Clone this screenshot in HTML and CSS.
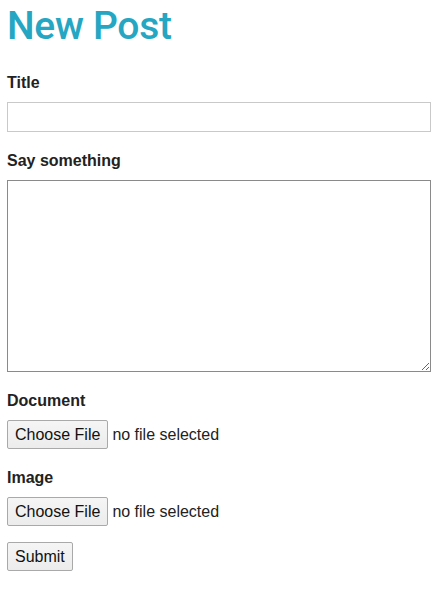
FILE: index.html
```html
<!DOCTYPE html>
<html lang="en">
<head>
<meta charset="utf-8">
<title>New Post</title>
<link rel="stylesheet" href="styles.css">
</head>
<body>
<main class="page">
  <h1 class="title">New Post</h1>
  <form class="post-form">
    <div class="field">
      <label class="label" for="title">Title</label>
      <input class="text-input" id="title" type="text">
    </div>
    <div class="field">
      <label class="label" for="body">Say something</label>
      <textarea class="textarea" id="body"></textarea>
    </div>
    <div class="field">
      <span class="label">Document</span>
      <div class="file-row">
        <button type="button" class="btn">Choose File</button>
        <span class="file-status">no file selected</span>
      </div>
    </div>
    <div class="field">
      <span class="label">Image</span>
      <div class="file-row">
        <button type="button" class="btn">Choose File</button>
        <span class="file-status">no file selected</span>
      </div>
    </div>
    <div class="actions">
      <button type="submit" class="btn">Submit</button>
    </div>
  </form>
</main>
</body>
</html>
```

FILE: styles.css
```css
* {
  box-sizing: border-box;
}

html, body {
  margin: 0;
  background: #ffffff;
}

.page {
  padding: 2px 7px 0;
  font-family: Roboto, "Liberation Sans", sans-serif;
  color: #222222;
}

.title {
  margin: 0 0 23px;
  font-size: 39px;
  line-height: 48px;
  font-weight: 500;
  color: #25a6c2;
  letter-spacing: -0.3px;
}

.post-form {
  display: flex;
  flex-direction: column;
}

.field {
  display: flex;
  flex-direction: column;
  margin-bottom: 19px;
}

.label {
  display: block;
  font-family: "Liberation Sans", Arial, sans-serif;
  font-size: 16px;
  line-height: 20px;
  font-weight: 700;
  margin-bottom: 9px;
  color: #222222;
}

.text-input {
  display: block;
  width: 100%;
  height: 30px;
  margin: 0;
  border: 1px solid #c9c9c9;
  border-radius: 0;
  padding: 4px 6px;
  font-size: 16px;
  background: #ffffff;
}

.textarea {
  display: block;
  width: 100%;
  height: 192px;
  margin: 0;
  border: 1px solid #8a8a8a;
  border-radius: 0;
  padding: 4px 6px;
  resize: vertical;
  background: #ffffff;
}

.file-row {
  display: flex;
  align-items: center;
  gap: 4px;
}

.btn {
  height: 29px;
  margin: 0;
  padding: 0 7px;
  border: 1px solid #a9a9a9;
  border-radius: 2px;
  background: linear-gradient(#f5f5f5, #ececec);
  font-family: "Liberation Sans", Arial, sans-serif;
  font-size: 16px;
  color: #111111;
}

.file-status {
  font-family: "Liberation Sans", Arial, sans-serif;
  font-size: 16px;
  color: #222222;
}

.actions {
  display: flex;
  margin-top: -3px;
}
```
